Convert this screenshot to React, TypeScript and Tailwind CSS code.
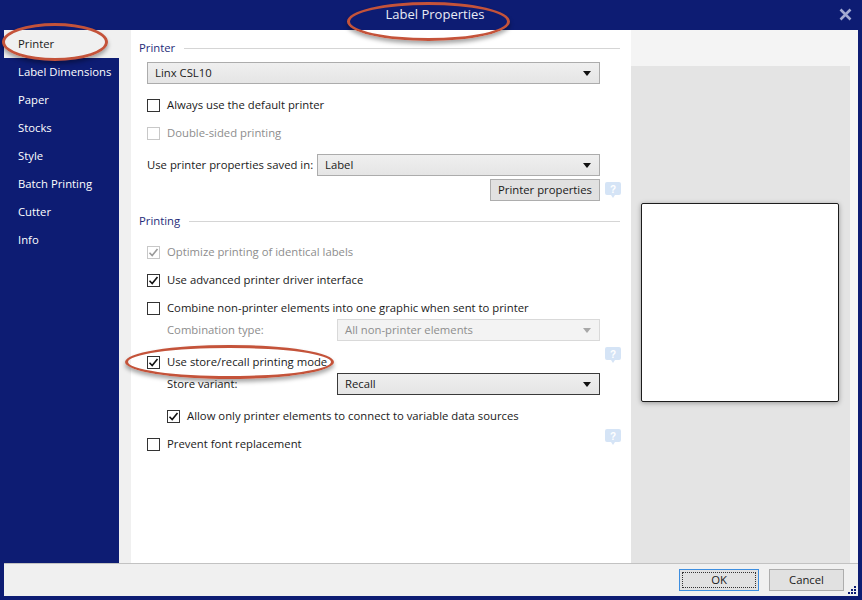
import { ReactNode } from "react";

const NAVY = "bg-[#0d1c73]";

const SIDEBAR_ITEMS = [
  "Printer",
  "Label Dimensions",
  "Paper",
  "Stocks",
  "Style",
  "Batch Printing",
  "Cutter",
  "Info",
];

const Check = ({ color }: { color: string }) => (
  <svg width="11" height="11" viewBox="0 0 11 11" className="block">
    <path d="M1.5 5.8 L4.2 8.5 L9.5 2" fill="none" stroke={color} strokeWidth="1.6" />
  </svg>
);

const CheckRow = ({
  label,
  checked = false,
  disabled = false,
  className = "",
}: {
  label: string;
  checked?: boolean;
  disabled?: boolean;
  className?: string;
}) => (
  <div className={`flex items-center h-[16px] gap-[7px] ${className}`}>
    <div
      className={`w-[13px] h-[13px] border flex items-center justify-center bg-white ${
        disabled ? "border-[#c8c8c8]" : "border-[#333333]"
      }`}
    >
      {checked && <Check color={disabled ? "#9a9a9a" : "#111111"} />}
    </div>
    <span className={`whitespace-nowrap ${disabled ? "text-[#8d8d8d]" : "text-[#1a1a1a]"}`}>{label}</span>
  </div>
);

const Arrow = ({ color = "#111" }: { color?: string }) => (
  <svg width="8" height="5" viewBox="0 0 8 5" className="block">
    <path d="M0 0 H8 L4 5 Z" fill={color} />
  </svg>
);

const Select = ({
  value,
  className = "",
  variant = "normal",
}: {
  value: string;
  className?: string;
  variant?: "normal" | "disabled" | "focused";
}) => {
  const styles =
    variant === "disabled"
      ? "border-[#d9d9d9] bg-[#f3f3f3] text-[#8d8d8d]"
      : variant === "focused"
      ? "border-[#3a3a3a] bg-gradient-to-b from-[#efefef] to-[#e5e5e5] text-[#1a1a1a]"
      : "border-[#acacac] bg-gradient-to-b from-[#efefef] to-[#e5e5e5] text-[#1a1a1a]";
  return (
    <div className={`h-[22px] border flex items-center justify-between pl-[7px] pr-[8px] ${styles} ${className}`}>
      <span className="whitespace-nowrap">{value}</span>
      <Arrow color={variant === "disabled" ? "#a8a8a8" : "#111"} />
    </div>
  );
};

const Help = ({ className = "" }: { className?: string }) => (
  <svg width="16" height="17" viewBox="0 0 16 17" className={`block ${className}`}>
    <path d="M2 0 H14 Q16 0 16 2 V11 Q16 13 14 13 H10 L8 16 L6 13 H2 Q0 13 0 11 V2 Q0 0 2 0 Z" fill="#d5e4f6" />
    <text x="8" y="10.5" textAnchor="middle" fontSize="10" fontWeight="bold" fill="#ffffff" fontFamily="Liberation Sans, sans-serif">
      ?
    </text>
  </svg>
);

const SectionHeader = ({ title, className = "" }: { title: string; className?: string }) => (
  <div className={`flex items-center h-[16px] pl-[8px] pr-[11px] gap-[9px] ${className}`}>
    <span className="text-[#1f2d7a]">{title}</span>
    <div className="flex-1 h-px bg-[#d5d5d5]" />
  </div>
);

const Ellipse = ({ className }: { className: string }) => (
  <div
    className={`absolute rounded-[50%] border-[3px] border-[#c4533a] shadow-[0_3px_4px_rgba(0,0,0,0.35)] pointer-events-none ${className}`}
  />
);

const Btn = ({ children, className = "" }: { children: ReactNode; className?: string }) => (
  <div className={`h-[22px] border flex items-center justify-center whitespace-nowrap ${className}`}>{children}</div>
);

export default function App() {
  return (
    <div
      className={`relative w-[862px] h-[600px] ${NAVY} flex flex-col overflow-hidden text-[11.3px]`}
      style={{ fontFamily: '"Open Sans", "Noto Sans", sans-serif' }}
    >
      {/* Title bar */}
      <div className="h-[30px] flex items-center relative">
        <div className="flex-1 text-center text-[13px] text-[#e9ebf5] pl-[8px]">Label Properties</div>
        <div className="absolute right-[10px] top-[8px]">
          <svg width="13" height="13" viewBox="0 0 13 13" className="block">
            <path d="M1.5 1.5 L11.5 11.5 M11.5 1.5 L1.5 11.5" stroke="#a3aad2" strokeWidth="2.6" />
          </svg>
        </div>
      </div>

      {/* Body */}
      <div className="flex flex-1 pr-[4px]">
        {/* Sidebar */}
        <div className="w-[119px] flex flex-col pl-[4px]">
          {SIDEBAR_ITEMS.map((item, i) => (
            <div
              key={item}
              className={`h-[28px] flex items-center pl-[14px] ${
                i === 0 ? "bg-[#f0f0f0] text-[#1a1a1a]" : "text-white"
              }`}
            >
              {item}
            </div>
          ))}
        </div>

        <div className="w-[12px] bg-[#f0f0f0]" />

        {/* Main content */}
        <div className="w-[500px] bg-white flex flex-col pt-[10px]">
          <SectionHeader title="Printer" />
          <div className="pl-[16px] w-[469px] flex flex-col">
            <Select value="Linx CSL10" className="mt-[6px]" />
            <CheckRow label="Always use the default printer" className="mt-[13px]" />
            <CheckRow label="Double-sided printing" disabled className="mt-[12px]" />
            <div className="flex items-center mt-[13px]">
              <span className="w-[170px] whitespace-nowrap text-[#1a1a1a]">Use printer properties saved in:</span>
              <Select value="Label" className="flex-1" />
            </div>
            <div className="flex justify-end mt-[3px] relative">
              <Btn className="w-[110px] bg-[#e1e1e1] border-[#adadad] text-[#1a1a1a]">Printer properties</Btn>
              <Help className="absolute left-full ml-[5px] top-[3px]" />
            </div>
          </div>

          <SectionHeader title="Printing" className="mt-[12px]" />
          <div className="pl-[16px] w-[469px] flex flex-col">
            <CheckRow label="Optimize printing of identical labels" checked disabled className="mt-[15px]" />
            <CheckRow label="Use advanced printer driver interface" checked className="mt-[12px]" />
            <CheckRow label="Combine non-printer elements into one graphic when sent to printer" className="mt-[12px]" />
            <div className="flex items-center mt-[3px] pl-[20px]">
              <span className="w-[170px] whitespace-nowrap text-[#8d8d8d]">Combination type:</span>
              <Select value="All non-printer elements" variant="disabled" className="flex-1" />
            </div>
            <div className="relative">
              <CheckRow label="Use store/recall printing mode" checked className="mt-[13px]" />
              <Help className="absolute left-full ml-[5px] top-[6px]" />
            </div>
            <div className="flex items-center mt-[3px] pl-[20px]">
              <span className="w-[170px] whitespace-nowrap text-[#1a1a1a]">Store variant:</span>
              <Select value="Recall" variant="focused" className="flex-1" />
            </div>
            <CheckRow
              label="Allow only printer elements to connect to variable data sources"
              checked
              className="mt-[13px] pl-[20px]"
            />
            <div className="relative">
              <CheckRow label="Prevent font replacement" className="mt-[12px]" />
              <Help className="absolute left-full ml-[5px] top-[5px]" />
            </div>
          </div>
        </div>

        {/* Preview panel */}
        <div className="flex-1 bg-[#f4f4f4] pt-[36px] pr-[8px] flex flex-col">
          <div className="flex-1 bg-[#e4e4e4] pt-[137px] pl-[10px]">
            <div className="w-[198px] h-[199px] bg-white border border-[#1c1c1c] rounded-[2px] shadow-[0_1px_5px_rgba(0,0,0,0.35)]" />
          </div>
        </div>
      </div>

      {/* Footer */}
      <div className="h-[33px] mx-[4px] mb-[4px] bg-[#f0f0f0] border-t border-[#c2c2c2] flex items-center justify-end pr-[14px] gap-[10px] relative">
        <Btn className="w-[80px] bg-[#e1e1e1] border-[#3d8ee0] p-[2px]">
          <div className="w-full h-full border border-dotted border-[#333] flex items-center justify-center text-[#1a1a1a]">
            OK
          </div>
        </Btn>
        <Btn className="w-[75px] bg-[#e1e1e1] border-[#adadad] text-[#1a1a1a]">Cancel</Btn>
        <svg width="10" height="10" viewBox="0 0 10 10" className="absolute right-[2px] bottom-[2px]">
          {[
            [8, 0],
            [5, 3],
            [8, 3],
            [2, 6],
            [5, 6],
            [8, 6],
          ].map(([x, y]) => (
            <rect key={`${x}-${y}`} x={x} y={y + 2} width="2" height="2" fill="#0d1c73" />
          ))}
        </svg>
      </div>

      {/* Annotation ellipses */}
      <Ellipse className="left-[2px] top-[23px] w-[106px] h-[38px]" />
      <Ellipse className="left-[347px] top-[2px] w-[163px] h-[39px]" />
      <Ellipse className="left-[125px] top-[345px] w-[209px] h-[34px]" />
    </div>
  );
}
